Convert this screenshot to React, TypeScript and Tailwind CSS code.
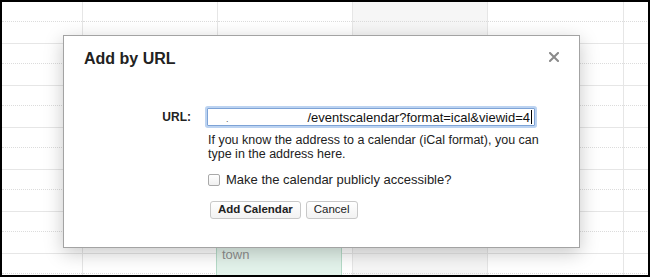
import React from 'react';

const FONT = "font-['Liberation_Sans',Arial,sans-serif]";

// column widths of the week grid behind the dialog
const columns = [81, 135, 135, 135, 136, 40];
const rowCount = 7;

const CalendarCell = ({ width, shaded }: { width: number; shaded?: boolean }) => (
  <div
    className={`h-[42px] shrink-0 border-r border-b border-[#e6e6e6] ${shaded ? 'bg-[#f6f6f6]' : 'bg-white'}`}
    style={{ width }}
  >
    <div className="h-[20px] border-b border-dotted border-[#dcdcdc]" />
  </div>
);

const CloseIcon = () => (
  <svg width="10" height="10" viewBox="0 0 10 10" className="block">
    <path d="M1 1 L9 9 M9 1 L1 9" stroke="#8a8a8a" strokeWidth="2" strokeLinecap="square" />
  </svg>
);

const DialogButton = ({ label, bold }: { label: string; bold?: boolean }) => (
  <button
    className={`h-[18px] px-[7px] rounded-[3px] border border-[#c8c8c8] bg-gradient-to-b from-white to-[#f2f2f2] text-[11.5px] leading-none text-[#222] ${bold ? 'font-bold' : ''}`}
  >
    {label}
  </button>
);

const AddByUrlDialog = () => (
  <div className="absolute left-[61px] top-[33px] w-[517px] h-[213px] bg-white border border-[#a3a3a3] shadow-[0_5px_18px_rgba(0,0,0,0.22)] pl-5 pt-[13px]">
    <div className="absolute right-[20px] top-[16px]">
      <CloseIcon />
    </div>
    <h2 className="text-[16px] leading-[20px] font-bold text-[#222]">Add by URL</h2>

    <div className="mt-[39px] grid grid-cols-[107px_328px] gap-x-4">
      <div className="flex items-center justify-end h-[18px] text-[12px] font-bold text-[#222]">URL:</div>
      <div>
        <div className="h-[18px] flex items-center justify-between border border-[#7ea3d6] shadow-[0_0_0_2px_#bcd3f1] rounded-[1px] bg-white pl-[18px] pr-[2px] text-[13px] leading-none text-[#111] overflow-hidden">
          <span className="text-[9px] text-[#555] self-end pb-[1px]">.</span>
          <span className="flex items-center whitespace-nowrap">
            /eventscalendar?format=ical&amp;viewid=4
            <span className="ml-px w-px h-[14px] bg-black" />
          </span>
        </div>
        <p className="mt-[7px] pl-px text-[12.5px] leading-[14px] text-[#222] whitespace-nowrap">
          If you know the address to a calendar (iCal format), you can
          <br />
          type in the address here.
        </p>
        <label className="mt-[11px] pl-px flex items-center gap-[6px] h-4 text-[13px] text-[#222]">
          <span className="w-3 h-3 rounded-[2px] border border-[#a9a9a9] bg-gradient-to-b from-white to-[#f0f0f0]" />
          Make the calendar publicly accessible?
        </label>
        <div className="mt-[13px] ml-[3px] flex gap-[5px]">
          <DialogButton label="Add Calendar" bold />
          <DialogButton label="Cancel" />
        </div>
      </div>
    </div>
  </div>
);

export default function App() {
  return (
    <div className={`${FONT} relative w-[650px] h-[277px] overflow-hidden border-2 border-black bg-white`}>
      <div className="flex flex-col">
        {Array.from({ length: rowCount }).map((_, r) => (
          <div key={r} className="flex">
            {columns.map((w, c) => (
              <CalendarCell key={c} width={w} shaded={c === 3} />
            ))}
          </div>
        ))}
      </div>

      {/* event block in the third column */}
      <div className="absolute left-[214px] top-[200px] w-[126px] h-[90px] bg-[#e3f3eb] border-x border-[#b5dbc8] pt-[46px] pl-[5px] text-[13px] leading-none text-[#8f8f8f]">
        town
      </div>

      <AddByUrlDialog />
    </div>
  );
}
